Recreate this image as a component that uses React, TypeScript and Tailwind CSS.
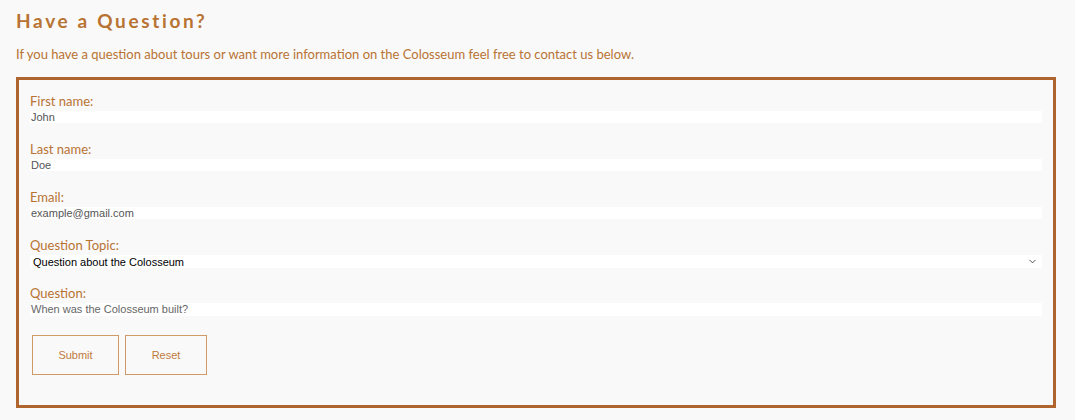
import { ChevronDown } from "lucide-react";

const fields = [
  { label: "First name:", value: "John" },
  { label: "Last name:", value: "Doe" },
  { label: "Email:", value: "example@gmail.com" },
];

const labelCls = "block font-[Lato,sans-serif] text-[13px] leading-[20px] text-[#b87333]";

export default function App() {
  return (
    <div className="min-h-screen bg-[#f9f9f9] px-4 pt-[9px] pb-3 font-[Lato,sans-serif]">
      <h2 className="text-[19px] leading-[24px] font-bold tracking-[0.14em] text-[#b87333]">
        Have a Question?
      </h2>
      <p className="mt-[12px] text-[13px] leading-[18px] text-[#b87333]">
        If you have a question about tours or want more information on the Colosseum feel free to contact us below.
      </p>

      <form className="mt-[14px] h-[331px] w-[1040px] border-[3px] border-[#b0642e] px-[11px] pt-[11px]">
        {fields.map((f) => (
          <div key={f.label} className="mb-[16px]">
            <label className={labelCls}>{f.label}</label>
            <div className="h-[12px] bg-white pl-[1px] font-['Liberation_Sans',Arial,sans-serif] text-[11px] leading-[12px] text-[#555]">
              {f.value}
            </div>
          </div>
        ))}

        <div className="mb-[15px]">
          <label className={labelCls}>Question Topic:</label>
          <div className="flex h-[13px] items-center justify-between bg-white pl-[3px] pr-[4px] font-['Liberation_Sans',Arial,sans-serif] text-[11px] leading-[12px] text-black">
            <span>Question about the Colosseum</span>
            <ChevronDown size={11} strokeWidth={2} className="text-[#444]" />
          </div>
        </div>

        <div>
          <label className={labelCls}>Question:</label>
          <div className="h-[13px] bg-white pl-[1px] font-['Liberation_Sans',Arial,sans-serif] text-[11px] leading-[13px] text-[#666]">
            When was the Colosseum built?
          </div>
        </div>

        <div className="mt-[19px] flex gap-[6px] pl-[2px] font-['Liberation_Sans',Arial,sans-serif]">
          <button
            type="button"
            className="h-[40px] w-[87px] border-[1.5px] border-[#d09a68] text-[11px] text-[#c07a3c]"
          >
            Submit
          </button>
          <button
            type="button"
            className="h-[40px] w-[82px] border-[1.5px] border-[#d09a68] text-[11px] text-[#c07a3c]"
          >
            Reset
          </button>
        </div>
      </form>
    </div>
  );
}
